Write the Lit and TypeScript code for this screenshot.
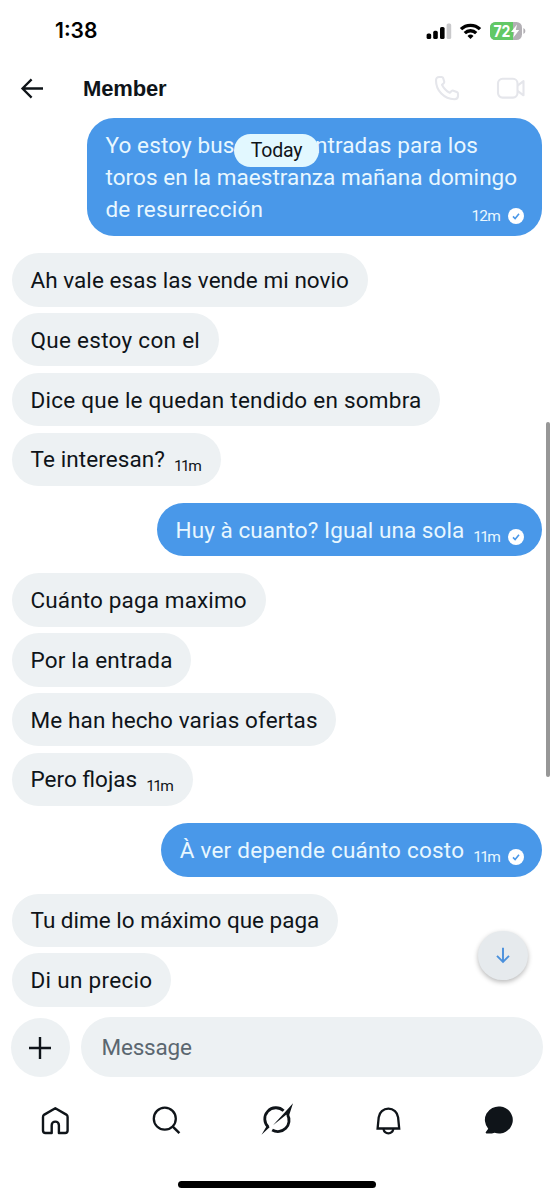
import { LitElement, html, css, svg, nothing } from "lit";
import { customElement, property } from "lit/decorators.js";

interface Line {
  text: string;
  spacing: number;
}

interface Message {
  lines: Line[];
  mine?: boolean;
  time?: string;
  first?: boolean;
  long?: boolean;
}

const line = (text: string, spacing = 0): Line => ({ text, spacing });

const messages: Message[] = [
  {
    lines: [
      line("Yo estoy buscando entradas para los", 0.13),
      line("toros en la maestranza mañana domingo", 0.05),
      line("de resurrección", 0.18),
    ],
    mine: true, time: "12m", long: true,
  },
  { lines: [line("Ah vale esas las vende mi novio", 0.05)], first: true },
  { lines: [line("Que estoy con el", 0.29)] },
  { lines: [line("Dice que le quedan tendido en sombra", 0.24)] },
  { lines: [line("Te interesan?", 0.1)], time: "11m" },
  { lines: [line("Huy à cuanto? Igual una sola", 0.07)], mine: true, time: "11m", first: true },
  { lines: [line("Cuánto paga maximo", 0.14)], first: true },
  { lines: [line("Por la entrada", 0.19)] },
  { lines: [line("Me han hecho varias ofertas", 0.12)] },
  { lines: [line("Pero flojas", 0)], time: "11m" },
  { lines: [line("À ver depende cuánto costo", 0.23)], mine: true, time: "11m", first: true },
  { lines: [line("Tu dime lo máximo que paga", 0)], first: true },
  { lines: [line("Di un precio", 0.31)] },
];

@customElement("message-bubble")
class MessageBubble extends LitElement {
  @property({ attribute: false }) message!: Message;

  static styles = css`
    :host { display: flex; margin-top: 6.4px; }
    :host([first]) { margin-top: 17px; }
    :host([long]) { margin-top: 0; }
    :host([mine]) { justify-content: flex-end; }
    .bubble {
      display: flex; flex-direction: column; justify-content: center; box-sizing: border-box;
      height: 53.4px; padding: 0 18.8px 0 18.5px; border-radius: 27px; background: #edf1f3; color: #0f1419;
    }
    .mine { background: #4998e9; color: #e8f7ff; padding-right: 18px; }
    .long { height: 118px; width: 455px; padding-bottom: 0.4px; }
    .row { display: flex; align-items: center; height: 32px; }
    .text { font-size: 22.5px; line-height: 32px; white-space: pre; }
    .meta { display: flex; align-items: center; height: 20px; padding: 14px 0 0 9px; margin-left: auto; }
    .time { font-size: 15.5px; line-height: 20px; letter-spacing: -1.7px; margin-right: 1.7px; }
    .mine .time { margin-right: 0.8px; }
    .long .time { letter-spacing: -0.8px; margin-right: 0; }
    .check { width: 16px; height: 16px; margin: 0 0 0 8px; flex: none; }
  `;

  render() {
    const m = this.message;
    const meta = m.time
      ? html`<span class="meta"><span class="time">${m.time}</span>${m.mine
          ? html`<svg class="check" viewBox="0 0 16 16"><circle cx="8" cy="8" r="8" fill="#fff" /><path d="M5 8.4 7.1 10.5 11 5.8" fill="none" stroke="#4998e9" stroke-width="1.6" /></svg>`
          : nothing}</span>`
      : nothing;
    return html`<div class="bubble ${m.mine ? "mine" : ""} ${m.long ? "long" : ""}">
      ${m.lines.map(
        (l, i) => html`<div class="row"><span class="text" style="letter-spacing:${l.spacing}px">${l.text}</span>${i === m.lines.length - 1 ? meta : nothing}</div>`
      )}
    </div>`;
  }
}

const tabs = [
  svg`<path d="M15.3 3.3 26.3 9.6Q27.6 10.5 27.6 12V25.5Q27.6 28 25.1 28H18.9V20.2A3.6 3.6 0 0 0 11.7 20.2V28H5.5Q3 28 3 25.5V12Q3 10.5 4.3 9.6Z" fill="none" stroke="#0f1419" stroke-width="2.4" stroke-linejoin="round"/>`,
  svg`<circle cx="13.8" cy="13.7" r="11" fill="none" stroke="#0f1419" stroke-width="2.3"/><path d="M21.8 21.6 28.4 28.2" stroke="#0f1419" stroke-width="2.5"/>`,
  svg`<g fill="none" stroke="#0f1419" stroke-width="2.8"><path d="M6.4 22.2A11.2 11.2 0 0 1 21.6 5.7"/><path d="M25.6 9.8A11.2 11.2 0 0 1 10.2 25"/></g><path d="M31-1.8 26.8 11.2 24.2 9.8 11 20.2 22 8.2ZM-.5 29.8 5 20.6 7.6 22.2Z" fill="#0f1419"/>`,
  svg`<path d="M4.6 23.5 5.7 12.3A9.75 9.75 0 0 1 25.1 12.3L26.2 23.5Z" fill="none" stroke="#0f1419" stroke-width="2.3"/><path d="M10.4 24Q11.4 28.3 15.4 28.3T20.4 24" fill="none" stroke="#0f1419" stroke-width="2.2"/>`,
  svg`<path d="M16.3 1.5A13.7 13.5 0 1 1 10.6 27.7Q7 28.9 2.4 28.4 1 27.7 2.2 26.5L4.2 23.7A13.7 13.5 0 0 1 16.3 1.5Z" fill="#0f1419"/>`,
];

@customElement("app-root")
class AppRoot extends LitElement {
  static styles = css`
    :host {
      display: flex; flex-direction: column; position: relative; box-sizing: border-box;
      width: 100%; height: 1199px; overflow: hidden; background: #fff; color: #0f1419;
      font-family: Roboto, sans-serif;
    }
    svg { display: block; }
    .status {
      height: 58px; flex: none; box-sizing: border-box; display: flex; align-items: center;
      justify-content: space-between; padding: 3px 28px 0 55px;
    }
    .clock { font: 600 21px/24px Inter, sans-serif; color: #000; }
    .header { height: 60px; flex: none; display: flex; align-items: center; padding: 0 28px 0 20px; }
    .name { flex: 1; margin-left: 39px; padding-top: 2px; font: 700 22px/28px "Liberation Sans", sans-serif; letter-spacing: -0.15px; }
    .video { margin-left: 36px; }
    .thread { height: 892px; flex: none; position: relative; padding: 0.3px 12px 0; box-sizing: border-box; overflow: hidden; }
    .day {
      position: absolute; left: 234px; top: 16px; width: 85px; height: 33px; border-radius: 17px;
      background: #e2f8ff; font-size: 19.5px; line-height: 34px; letter-spacing: -0.2px; text-align: center;
    }
    .thumb { position: absolute; left: 546px; top: 304px; width: 4px; height: 355px; border-radius: 2px; background: #979797; }
    .jump {
      position: absolute; left: 478px; top: 813px; width: 50px; height: 49px; border-radius: 25px;
      background: #e6eaed; box-shadow: 0 2px 5px rgba(0, 0, 0, 0.28);
      display: flex; align-items: center; justify-content: center;
    }
    .composer { height: 74px; flex: none; box-sizing: border-box; display: flex; gap: 10.5px; padding: 7px 11px 7px 11px; }
    .plus { width: 59px; height: 59px; margin-top: 1px; border-radius: 50%; background: #edf1f3; display: flex; align-items: center; justify-content: center; }
    .plus svg { margin-right: 1px; }
    .field { flex: 1; height: 60px; border-radius: 30px; background: #edf1f3; color: #5b6770; font-size: 22.5px; line-height: 60px; letter-spacing: -0.2px; padding-left: 21px; }
    .tabs { height: 70px; flex: none; display: grid; grid-template-columns: repeat(5, 1fr); place-items: center; padding-top: 1px; }
    .home { width: 198px; height: 7px; border-radius: 4px; background: #000; margin: 26px auto 0; }
  `;

  render() {
    return html`
      <div class="status">
        <span class="clock">1:38</span>
        <svg width="100" height="20" viewBox="0 0 100 20">
          <g><rect x="0.6" y="12.5" width="4.6" height="5.5" rx="1.6"/><rect x="7.2" y="9.8" width="4.6" height="8.2" rx="1.6"/><rect x="14" y="6" width="4.6" height="12" rx="1.6"/><rect x="20.6" y="2.5" width="4.6" height="15.5" rx="1.6" fill="#c9c9cb"/></g>
          <g fill="none" stroke="#000" stroke-width="3.3"><path d="M35 8.2A13.5 13.5 0 0 1 54 8.2"/><path d="M38.8 12.1A8.1 8.1 0 0 1 50.2 12.1"/></g><path d="M44.5 18 41.5 15A4.4 4.4 0 0 1 47.5 15Z"/>
          <rect x="64" y="1" width="32" height="18" rx="5.5" fill="#b3b0b5"/><path d="M69.5 1H87V19H69.5A5.5 5.5 0 0 1 64 13.5V6.5A5.5 5.5 0 0 1 69.5 1Z" fill="#62c866"/>
          <path d="M97.4 7Q99.4 8 99.4 10T97.4 13Z" fill="#b3b0b5"/>
          <text x="67.4" y="15.9" font-family="Inter" font-size="16.5" font-weight="700" fill="#fff" textLength="17" lengthAdjust="spacingAndGlyphs">72</text>
          <path d="M91 3.6 85 11H88.4L87.2 16.8 93.2 9.1H89.8Z" fill="#fff"/>
        </svg>
      </div>
      <div class="header">
        <svg width="24" height="24" viewBox="0 0 24 24" fill="none" stroke="#0f1419" stroke-width="2.3"><path d="M23 12.5H2.6M11.6 3.4 2.5 12.5 11.6 21.6"/></svg>
        <span class="name">Member</span>
        <svg width="26" height="26" viewBox="0 0 26 26" fill="none" stroke="#e5e6eb" stroke-width="2.1" stroke-linejoin="round"><path d="M2 5.5Q2 2 5.2 2H7.6Q8.8 2 9.2 3.2L10.2 6.5Q10.4 7.5 9.7 8.2L8 9.8Q10.6 15.2 15.8 17.8L17.6 16Q18.4 15.3 19.4 15.7L22.8 17Q24 17.5 24 18.8V21Q24 24.2 20.4 24.2C10 24 2 15.6 2 5.5Z"/></svg>
        <svg class="video" width="30" height="24" viewBox="0 0 30 24" fill="none" stroke="#e5e6eb" stroke-width="2.1" stroke-linejoin="round"><rect x="2" y="2.8" width="19.5" height="18.8" rx="4.5"/><path d="M21.5 9.6 27.5 5.1V19.3L21.5 14.8"/></svg>
      </div>
      <div class="thread">
        ${messages.map((m) => html`<message-bubble .message=${m} ?mine=${m.mine} ?first=${m.first} ?long=${m.long}></message-bubble>`)}
        <div class="day">Today</div>
        <div class="thumb"></div>
        <div class="jump"><svg width="16" height="18" viewBox="0 0 16 18" fill="none" stroke="#4a90dc" stroke-width="1.9"><path d="M8 .8V14.8M2 8.9 8 14.9 14 8.9"/></svg></div>
      </div>
      <div class="composer">
        <div class="plus"><svg width="22" height="22" viewBox="0 0 22 22" stroke="#0f1419" stroke-width="2.4"><path d="M11 0V22M0 11H22"/></svg></div>
        <div class="field">Message</div>
      </div>
      <div class="tabs">${tabs.map((t) => html`<svg width="30" height="30" viewBox="0 0 30 30" overflow="visible">${t}</svg>`)}</div>
      <div class="home"></div>
    `;
  }
}
